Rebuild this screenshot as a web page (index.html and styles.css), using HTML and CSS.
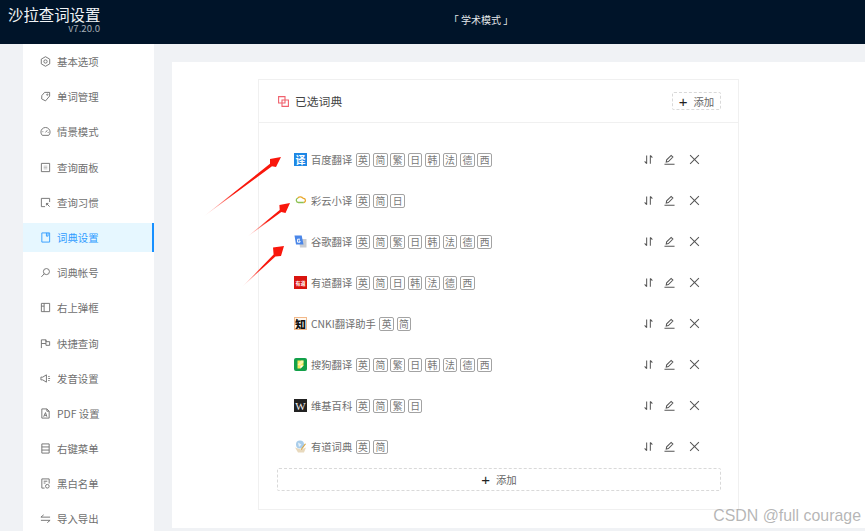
FILE: index.html
```html
<!DOCTYPE html>
<html lang="zh">
<head>
<meta charset="utf-8">
<title>沙拉查词设置</title>
<link rel="stylesheet" href="styles.css">
</head>
<body>
<svg class="sprite" width="0" height="0" aria-hidden="true">
  <symbol id="i-sort" viewBox="0 0 12 12"><path d="M4 1.500v9M4 10.500 1.800 8M8 10.500v-9M8 1.500 10.200 4"/></symbol>
  <symbol id="i-edit" viewBox="0 0 12 12"><path d="M.5 11.200h11M2.400 8.800l.5-2.400L7.800 1.500l1.900 1.900-4.900 4.900z"/></symbol>
  <symbol id="i-close" viewBox="0 0 12 12"><path d="M1.200 1.200l9.600 9.600M10.800 1.200l-9.600 9.600"/></symbol>
</svg>

<header class="topbar">
  <div class="brand">
    <div class="brand-title">沙拉查词设置</div>
    <div class="brand-version">v7.20.0</div>
  </div>
  <div class="mode">「 学术模式 」</div>
</header>

<div class="main">
  <nav class="side">
    <a class="side-item"><svg class="side-icon" viewBox="0 0 12 12"><path d="M6 .800 10.600 3.400V8.600L6 11.200 1.400 8.600V3.400z"/><circle cx="6" cy="6" r="1.800"/></svg>基本选项</a>
    <a class="side-item"><svg class="side-icon" viewBox="0 0 12 12"><path d="M5 1.500h5.500v4L6 10.800 1.800 8.600 2 5z"/><circle cx="8" cy="4" r=".7"/></svg>单词管理</a>
    <a class="side-item"><svg class="side-icon" viewBox="0 0 12 12"><path d="M2.500 10.200a5 5 0 1 1 7 0zM6 7l2-2.400M2.600 6.200h1M8.400 7h1"/></svg>情景模式</a>
    <a class="side-item"><svg class="side-icon" viewBox="0 0 12 12"><path d="M1.500 1.500h9v9h-9z"/><path class="soft" d="M4 4.500h4M4 6h4M4 7.500h4"/></svg>查询面板</a>
    <a class="side-item"><svg class="side-icon" viewBox="0 0 12 12"><path d="M10.500 5.500v-4h-9v9h4M7 7l3.500 3.500M7 7h2.200M7 7v2.200"/></svg>查询习惯</a>
    <a class="side-item side-item-active"><svg class="side-icon" viewBox="0 0 12 12"><path d="M2 1h8.500v10H2zM7 1v3.500h1.800V1"/></svg>词典设置</a>
    <a class="side-item"><svg class="side-icon" viewBox="0 0 12 12"><circle cx="7" cy="5" r="3.300"/><path d="M4.600 7.400 1.500 10.800"/></svg>词典帐号</a>
    <a class="side-item"><svg class="side-icon" viewBox="0 0 12 12"><path d="M1.500 1.500h9v9h-9zM1.500 4.500h3M4.500 1.500v9"/></svg>右上弹框</a>
    <a class="side-item"><svg class="side-icon" viewBox="0 0 12 12"><path d="M1.500 11V2h5v2h4v4h-4V6h-5M6.500 2v4"/></svg>快捷查询</a>
    <a class="side-item"><svg class="side-icon" viewBox="0 0 12 12"><path d="M1 4.500v3h2l4 2.500V2L3 4.500zM9 3.800h1.500M9 6h2M9 8.200h1.500"/></svg>发音设置</a>
    <a class="side-item"><svg class="side-icon" viewBox="0 0 12 12"><path d="M2 1h5.500L10 3.500V11H2zM7.500 1v2.500H10M4 9.500 6 5l1.500 4.500M4.800 8h2.200"/></svg>PDF 设置</a>
    <a class="side-item"><svg class="side-icon" viewBox="0 0 12 12"><path d="M2 1h8v10H2zM2 4.300h8M2 7.700h8"/></svg>右键菜单</a>
    <a class="side-item"><svg class="side-icon" viewBox="0 0 12 12"><path d="M5 11H2V1h8v5M4 3.500h4M4 5.500h2"/><circle cx="8" cy="9" r="2"/></svg>黑白名单</a>
    <a class="side-item"><svg class="side-icon" viewBox="0 0 12 12"><path d="M1 4.500h10M1 4.500 4 2M11 8H1M11 8 8 10.500"/></svg>导入导出</a>
  </nav>

  <section class="panel">
    <div class="card">
      <div class="card-head">
        <svg class="card-icon" viewBox="0 0 11 11"><path d="M.6.6h6.400v6.400H.6zM4 4h6.400v6.400H4z"/></svg>
        <span class="card-title">已选词典</span>
        <button class="add-small"><span class="plus">+</span>添加</button>
      </div>
      <div class="card-body">
        <div class="dict">
          <span class="dict-icon ic-baidu">译</span><span class="dict-name">百度翻译</span>
          <span class="tags"><i>英</i><i>简</i><i>繁</i><i>日</i><i>韩</i><i>法</i><i>德</i><i>西</i></span>
          <span class="acts"><svg class="act"><use href="#i-sort"/></svg><svg class="act"><use href="#i-edit"/></svg><svg class="act"><use href="#i-close"/></svg></span>
        </div>
        <div class="dict">
          <svg class="dict-icon" viewBox="0 0 13 13" fill="none" stroke-width="1.300"><path d="M9.800 8.500H4.500a2.300 2.300 0 0 1-.6-4.500" stroke="#8cc152"/><path d="M3.900 4A3 3 0 0 1 9 4.500" stroke="#e9a92e"/><path d="M9 4.500a2 2 0 0 1 .8 4" stroke="#e9a92e"/></svg><span class="dict-name">彩云小译</span>
          <span class="tags"><i>英</i><i>简</i><i>日</i></span>
          <span class="acts"><svg class="act"><use href="#i-sort"/></svg><svg class="act"><use href="#i-edit"/></svg><svg class="act"><use href="#i-close"/></svg></span>
        </div>
        <div class="dict">
          <svg class="dict-icon" viewBox="0 0 13 13"><path d="M5 4h7.500v8.500H6z" fill="#c9ccd1"/><path d="M.5.500h7.200L9.500 9.500H2z" fill="#4a86e8"/><path d="M6 4.200H3.600v3H6V6H5" fill="none" stroke="#fff"/></svg><span class="dict-name">谷歌翻译</span>
          <span class="tags"><i>英</i><i>简</i><i>繁</i><i>日</i><i>韩</i><i>法</i><i>德</i><i>西</i></span>
          <span class="acts"><svg class="act"><use href="#i-sort"/></svg><svg class="act"><use href="#i-edit"/></svg><svg class="act"><use href="#i-close"/></svg></span>
        </div>
        <div class="dict">
          <span class="dict-icon ic-youdao">有道</span><span class="dict-name">有道翻译</span>
          <span class="tags"><i>英</i><i>简</i><i>日</i><i>韩</i><i>法</i><i>德</i><i>西</i></span>
          <span class="acts"><svg class="act"><use href="#i-sort"/></svg><svg class="act"><use href="#i-edit"/></svg><svg class="act"><use href="#i-close"/></svg></span>
        </div>
        <div class="dict">
          <span class="dict-icon ic-cnki">知</span><span class="dict-name">CNKI翻译助手</span>
          <span class="tags"><i>英</i><i>简</i></span>
          <span class="acts"><svg class="act"><use href="#i-sort"/></svg><svg class="act"><use href="#i-edit"/></svg><svg class="act"><use href="#i-close"/></svg></span>
        </div>
        <div class="dict">
          <svg class="dict-icon" viewBox="0 0 13 13"><rect width="13" height="13" rx="2" fill="#12a049"/><path d="M3.500 2.500h6v5l-3 3h-3z" fill="#f6e65a"/><path d="M6.500 7.500h3l-3 3z" fill="#fff"/><path d="M3.500 7 7 2.500h2.500v2L6 7.500z" fill="#fff" opacity=".5"/></svg><span class="dict-name">搜狗翻译</span>
          <span class="tags"><i>英</i><i>简</i><i>繁</i><i>日</i><i>韩</i><i>法</i><i>德</i><i>西</i></span>
          <span class="acts"><svg class="act"><use href="#i-sort"/></svg><svg class="act"><use href="#i-edit"/></svg><svg class="act"><use href="#i-close"/></svg></span>
        </div>
        <div class="dict">
          <span class="dict-icon ic-wiki">W</span><span class="dict-name">维基百科</span>
          <span class="tags"><i>英</i><i>简</i><i>繁</i><i>日</i></span>
          <span class="acts"><svg class="act"><use href="#i-sort"/></svg><svg class="act"><use href="#i-edit"/></svg><svg class="act"><use href="#i-close"/></svg></span>
        </div>
        <div class="dict">
          <svg class="dict-icon" viewBox="0 0 13 13"><path d="M1 7.500 4 12.500h6l2-5-5 2z" fill="#e8d9bd"/><circle cx="6" cy="4.500" r="4" fill="#a9cdea"/><path d="M4 2.500 7.500 4.500 5 7z" fill="#e8f2fa"/><path d="M12 4 7.500 10 6.800 9.200 11 3.500z" fill="#d9a441"/></svg><span class="dict-name">有道词典</span>
          <span class="tags"><i>英</i><i>简</i></span>
          <span class="acts"><svg class="act"><use href="#i-sort"/></svg><svg class="act"><use href="#i-edit"/></svg><svg class="act"><use href="#i-close"/></svg></span>
        </div>
        <button class="add-wide"><span class="plus">+</span>添加</button>
      </div>
    </div>
  </section>
</div>

<svg class="arrows" viewBox="0 0 865 531" aria-hidden="true">
  <defs>
    <linearGradient id="fade1" gradientUnits="userSpaceOnUse" x1="203" y1="217" x2="235" y2="193"><stop offset="0" stop-color="#ff2a1a" stop-opacity="0"/><stop offset="1" stop-color="#f9170c"/></linearGradient>
    <linearGradient id="fade2" gradientUnits="userSpaceOnUse" x1="247" y1="237" x2="268" y2="220"><stop offset="0" stop-color="#ff2a1a" stop-opacity="0"/><stop offset="1" stop-color="#f9170c"/></linearGradient>
    <linearGradient id="fade3" gradientUnits="userSpaceOnUse" x1="242" y1="287" x2="262" y2="267"><stop offset="0" stop-color="#ff2a1a" stop-opacity="0"/><stop offset="1" stop-color="#f9170c"/></linearGradient>
  </defs>
  <path fill="url(#fade1)" d="M203 217 270 163.800 270 159 281 157 276 167 272 166.200z"/>
  <path fill="url(#fade2)" d="M247 237 279.700 210 279.400 205 290 203 285.500 213 281.300 212z"/>
  <path fill="url(#fade3)" d="M242 287 273.600 254.600 273 247.500 284 246 281 256 275.400 256.400z"/>
</svg>

<div class="watermark">CSDN @full courage</div>
</body>
</html>
```

FILE: styles.css
```css
* { box-sizing: border-box; }

html, body { margin: 0; height: 531px; }

body {
  display: flex;
  flex-direction: column;
  overflow: hidden;
  position: relative;
  background: #f0f2f5;
  font-family: "Noto Sans CJK SC", "Noto Sans", sans-serif;
  color: #666;
}

.sprite { position: absolute; }

.topbar {
  flex: none;
  height: 44px;
  display: flex;
  align-items: center;
  background: #001429;
  color: #fff;
  position: relative;
}

.brand { margin-left: 8px; width: 92px; margin-top: -5px; }
.brand-title { font-size: 15.4px; line-height: 18px; white-space: nowrap; color: #f2f5f7; }
.brand-version { font-size: 9.6px; line-height: 11px; text-align: right; color: #a5adb5; }

.mode {
  position: absolute;
  left: 431px;
  width: 100px;
  top: 13px;
  font-size: 10px;
  line-height: 14px;
  text-align: center;
  color: #e4e7ea;
}

.main { flex: 1; display: flex; min-height: 0; }

.side {
  flex: none;
  width: 131px;
  margin-left: 23px;
  padding-top: 3px;
  background: #fff;
  overflow: hidden;
}

.side-item {
  display: flex;
  align-items: center;
  gap: 6px;
  height: 29px;
  margin-bottom: 6.2px;
  padding-left: 17px;
  font-size: 10.4px;
  white-space: nowrap;
  color: #6f6f6f;
}

.side-item-active {
  color: #2f9bff;
  background: #e6f7ff;
  border-right: 2.5px solid #1890ff;
}

.side-icon {
  flex: none;
  width: 11px;
  height: 11px;
  fill: none;
  stroke: currentColor;
  stroke-width: 1;
}

.soft { opacity: 0.45; }

.panel {
  flex: 1;
  margin: 18px 0 3px 18px;
  padding: 17px 0 0 86px;
  background: #fff;
}

.card {
  width: 481px;
  height: 431px;
  border: 1px solid #f0f0f0;
}

.card-head {
  height: 43px;
  display: flex;
  align-items: center;
  padding: 0 17px 0 19px;
  border-bottom: 1px solid #f0f0f0;
}

.card-icon {
  flex: none;
  width: 11px;
  height: 11px;
  fill: none;
  stroke: #f0616d;
  stroke-width: 1.100;
}

.card-title {
  margin-left: 6px;
  margin-top: -2px;
  font-size: 11.8px;
  color: #444;
}

.add-small, .add-wide {
  display: flex;
  align-items: center;
  justify-content: center;
  padding: 0;
  background: #fff;
  border: 1px dashed #d9d9d9;
  border-radius: 2px;
  font-family: inherit;
  font-size: 10.4px;
  color: #666;
}

.add-small { width: 49px; height: 18px; margin-left: auto; }

.plus {
  font-family: "Liberation Sans", sans-serif;
  font-size: 15px;
  line-height: 1;
  color: #222;
  margin-right: 6px;
}

.card-body { padding: 16px 17px 0 18px; }

.dict {
  height: 41px;
  display: flex;
  align-items: center;
  padding-left: 17px;
}

.dict-icon {
  flex: none;
  width: 13px;
  height: 13px;
  margin-right: 4px;
  display: flex;
  align-items: center;
  justify-content: center;
  overflow: hidden;
}

.ic-baidu { background: #1e88e5; color: #fff; font-size: 10px; font-weight: 700; }
.ic-youdao { background: #d9140f; color: #fff; font-size: 5px; font-weight: 700; }
.ic-cnki {
  background: #fff7ee;
  border: 1px solid #f2b98a;
  color: #111;
  font-size: 11px;
  font-weight: 900;
}
.ic-wiki {
  background: #222;
  color: #f2f2f2;
  font-family: "Liberation Serif", serif;
  font-size: 11px;
}

.dict-name { font-size: 10.3px; white-space: nowrap; color: #6f6f6f; }

.tags { display: flex; gap: 2.9px; margin-left: 3.500px; }

.tags i {
  width: 14.500px;
  height: 14px;
  display: flex;
  align-items: center;
  justify-content: center;
  border: 1px solid #a3a3a3;
  border-radius: 2px;
  font-style: normal;
  font-size: 9.8px;
  color: #777;
}

.acts {
  margin-left: auto;
  margin-right: 21.500px;
  display: flex;
  align-items: center;
  gap: 10.500px;
}

.act {
  width: 11px;
  height: 11px;
  fill: none;
  stroke: #555;
  stroke-width: 1.100;
}

.act:first-child { margin-right: -1px; }
.act:last-child { margin-left: 3.500px; }

.add-wide { width: 444px; height: 23px; margin-top: 0.500px; }

.arrows {
  position: absolute;
  left: 0;
  top: 0;
  width: 865px;
  height: 531px;
  pointer-events: none;
}

.watermark {
  position: absolute;
  right: 4px;
  top: 506px;
  font-family: "Liberation Sans", sans-serif;
  font-size: 15.9px;
  line-height: 20px;
  white-space: nowrap;
  color: rgba(150, 150, 150, 0.7);
}
```
